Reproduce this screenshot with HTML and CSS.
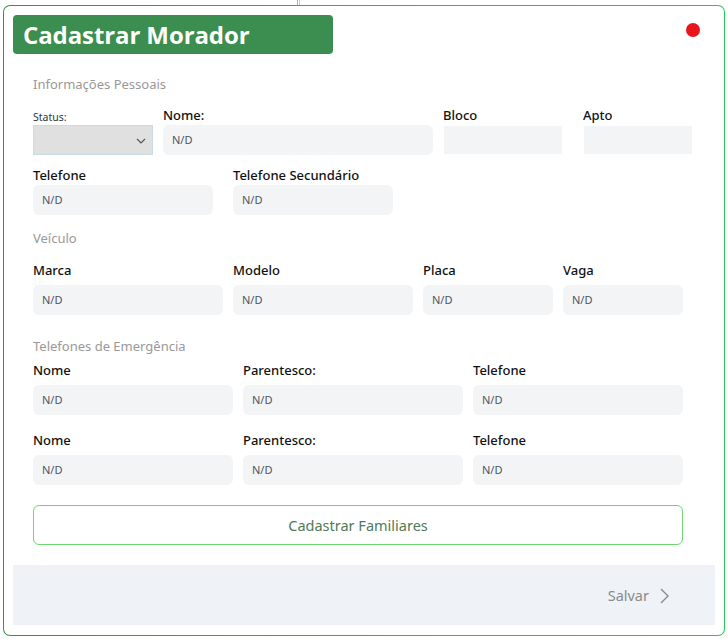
FILE: index.html
```html
<!DOCTYPE html>
<html lang="pt-BR">
<head>
<meta charset="utf-8">
<title>Cadastrar Morador</title>
<link rel="stylesheet" href="styles.css">
</head>
<body>
<div class="backdrop">
  <span class="bg-line"></span>
  <div class="modal-frame">
    <div class="modal">
      <div class="modal-head">
        <h1 class="title">Cadastrar Morador</h1>
        <span class="dot"></span>
      </div>
      <div class="modal-body">
        <h2 class="section section-first">Informações Pessoais</h2>
        <div class="row row-first">
          <div class="field w-status">
            <label class="label label-small">Status:</label>
            <div class="select">
              <svg class="chev" width="10" height="6" viewBox="0 0 10 6"><path d="M1 1l4 4 4-4" fill="none" stroke="#555" stroke-width="1.2"/></svg>
            </div>
          </div>
          <div class="field w-nome">
            <label class="label">Nome:</label>
            <div class="input">N/D</div>
          </div>
          <div class="field w-bloco">
            <label class="label">Bloco</label>
            <div class="input input-flat"></div>
          </div>
          <div class="field w-apto">
            <label class="label">Apto</label>
            <div class="input input-flat"></div>
          </div>
        </div>
        <div class="row row-gap">
          <div class="field w-180">
            <label class="label">Telefone</label>
            <div class="input">N/D</div>
          </div>
          <div class="field w-160 ml-20">
            <label class="label">Telefone Secundário</label>
            <div class="input">N/D</div>
          </div>
        </div>

        <h2 class="section section-veic">Veículo</h2>
        <div class="row row-loose row-veic">
          <div class="field w-190">
            <label class="label">Marca</label>
            <div class="input">N/D</div>
          </div>
          <div class="field w-180 ml-10">
            <label class="label">Modelo</label>
            <div class="input">N/D</div>
          </div>
          <div class="field w-130 ml-10">
            <label class="label">Placa</label>
            <div class="input">N/D</div>
          </div>
          <div class="field w-120 ml-10">
            <label class="label">Vaga</label>
            <div class="input">N/D</div>
          </div>
        </div>

        <h2 class="section section-emerg">Telefones de Emergência</h2>
        <div class="row row-loose row-emerg1">
          <div class="field w-200">
            <label class="label">Nome</label>
            <div class="input">N/D</div>
          </div>
          <div class="field w-220 ml-10">
            <label class="label">Parentesco:</label>
            <div class="input">N/D</div>
          </div>
          <div class="field w-210 ml-10">
            <label class="label">Telefone</label>
            <div class="input">N/D</div>
          </div>
        </div>
        <div class="row row-loose row-emerg2">
          <div class="field w-200">
            <label class="label">Nome</label>
            <div class="input">N/D</div>
          </div>
          <div class="field w-220 ml-10">
            <label class="label">Parentesco:</label>
            <div class="input">N/D</div>
          </div>
          <div class="field w-210 ml-10">
            <label class="label">Telefone</label>
            <div class="input">N/D</div>
          </div>
        </div>

        <button class="btn-familiares">Cadastrar Familiares</button>
      </div>
      <div class="modal-foot">
        <span class="save">Salvar</span>
        <svg class="save-chev" width="9" height="16" viewBox="0 0 9 16"><path d="M1 1l7 7-7 7" fill="none" stroke="#8a8a8a" stroke-width="1.4"/></svg>
      </div>
    </div>
  </div>
</div>
</body>
</html>
```

FILE: styles.css
```css
* { box-sizing: border-box; }
html, body { margin: 0; padding: 0; background: #ffffff; }
body { font-family: "Noto Sans", "Open Sans", sans-serif; }

.backdrop {
  position: relative;
  width: 728px;
  height: 639px;
  padding: 5px 3px 3px 3px;
}
.bg-line {
  position: absolute;
  left: 297px;
  top: 0;
  width: 3px;
  height: 5px;
  border-left: 1px solid #7ccf7c;
  border-right: 1px solid #c9c3e6;
}

.modal-frame {
  width: 722px;
  height: 631px;
  padding: 1px;
  border-radius: 7px;
  background: linear-gradient(90deg, #3b8e4f 0%, #2fb856 60%, #22cc55 100%);
}
.modal {
  width: 100%;
  height: 100%;
  background: #ffffff;
  border-radius: 6px;
  padding: 9px 9px 0 9px;
  display: flex;
  flex-direction: column;
}

.modal-head {
  display: flex;
  justify-content: space-between;
  align-items: flex-start;
}
.title {
  margin: 0;
  width: 320px;
  height: 39px;
  background: #3b8e4f;
  border-radius: 4px;
  color: #ffffff;
  font-family: "Open Sans", sans-serif;
  font-weight: 700;
  font-size: 24px;
  line-height: 39px;
  padding-left: 10px;
  letter-spacing: -0.1px;
}
.dot {
  width: 14px;
  height: 14px;
  border-radius: 50%;
  background: #e8161b;
  margin-top: 8px;
  margin-right: 15px;
}

.modal-body {
  padding-left: 20px;
}

.section {
  margin: 0;
  font-size: 13px;
  font-weight: 400;
  color: #999999;
  line-height: 20px;
}
.section-first { margin-top: 20px; }
.section-veic { margin-top: 13px; }
.section-emerg { margin-top: 21px; }

.row { display: flex; align-items: flex-start; }
.row-first { margin-top: 13px; }
.row-gap { margin-top: 12px; }
.row-veic { margin-top: 14px; }
.row-emerg1 { margin-top: 6px; }
.row-emerg2 { margin-top: 17px; }

.field { display: flex; flex-direction: column; }
.label {
  font-size: 13px;
  font-weight: 500;
  color: #111111;
  line-height: 16px;
  height: 16px;
  margin-bottom: 2px;
}
.row-loose .label { margin-bottom: 7px; }
.label-small {
  font-size: 10.5px;
  font-weight: 400;
  color: #333333;
  line-height: 14px;
  height: 14px;
  margin-top: 3px;
  margin-bottom: 1px;
}

.input {
  height: 30px;
  background: #f3f4f6;
  border-radius: 6px;
  font-size: 11px;
  color: #4b5563;
  line-height: 30px;
  padding-left: 9px;
}
.input-flat {
  height: 28px;
  margin-top: 1px;
  margin-left: 1px;
  border-radius: 0;
}

.select {
  height: 30px;
  background: #e0e0e0;
  border: 1px solid #c8dde3;
  position: relative;
}
.chev { position: absolute; right: 6px; top: 12px; }

.w-status { width: 120px; }
.w-nome { width: 270px; margin-left: 10px; }
.w-bloco { width: 119px; margin-left: 10px; }
.w-apto { width: 109px; margin-left: 21px; }
.w-120 { width: 120px; }
.w-130 { width: 130px; }
.w-160 { width: 160px; }
.w-180 { width: 180px; }
.w-190 { width: 190px; }
.w-200 { width: 200px; }
.w-210 { width: 210px; }
.w-220 { width: 220px; }
.ml-10 { margin-left: 10px; }
.ml-20 { margin-left: 20px; }

.btn-familiares {
  display: block;
  margin-top: 20px;
  width: 650px;
  height: 40px;
  background: #ffffff;
  border: 1px solid #6fd66f;
  border-radius: 6px;
  font-family: "Noto Sans", sans-serif;
  font-size: 14.5px;
  color: #4f7a58;
  cursor: pointer;
}

.modal-foot {
  margin-top: 20px;
  height: 60px;
  background: #eff2f6;
  display: flex;
  align-items: center;
  justify-content: flex-end;
  padding-right: 46px;
}
.save {
  font-size: 14.5px;
  color: #8a8a8a;
  margin-right: 11px;
}
.save-chev { margin-top: 1px; }
```
